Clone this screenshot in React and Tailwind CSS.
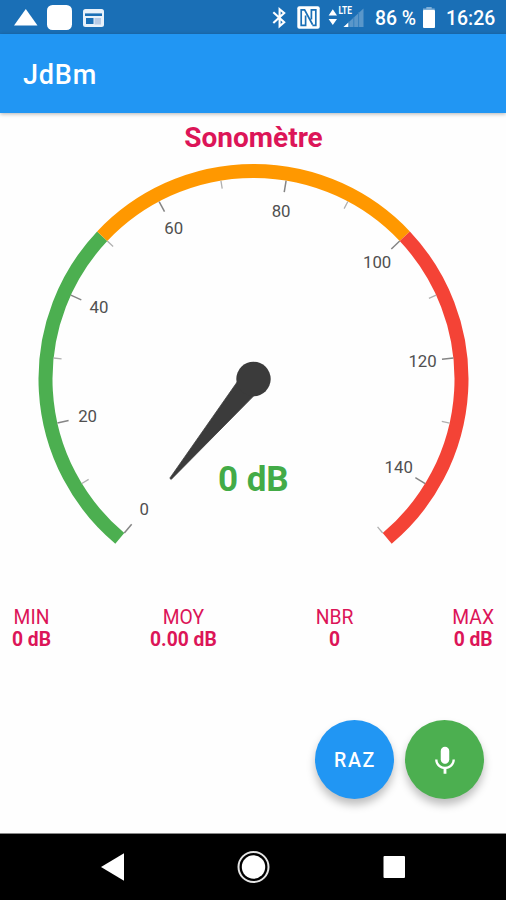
import React from 'react';

const CX = 253.5;
const CY = 379;
const START = 130;
const SWEEP = 280;
const MAX = 150;

const zones = [
    { from: 0, to: 50, color: '#4caf50' },
    { from: 50, to: 100, color: '#ff9800' },
    { from: 100, to: 150, color: '#f44336' },
];

const stats = [
    { label: 'MIN', value: '0 dB' },
    { label: 'MOY', value: '0.00 dB' },
    { label: 'NBR', value: '0' },
    { label: 'MAX', value: '0 dB' },
];

const polar = (value, r) => {
    const a = ((START + (value / MAX) * SWEEP) * Math.PI) / 180;
    return [CX + r * Math.cos(a), CY + r * Math.sin(a)];
};

const arc = (from, to, r) => {
    const [x1, y1] = polar(from, r);
    const [x2, y2] = polar(to, r);
    return `M${x1} ${y1} A${r} ${r} 0 0 1 ${x2} ${y2}`;
};

const Gauge = () => {
    const ticks = Array.from({ length: 16 }, (_, i) => i * 10);
    return (
        <svg width="506" height="390" viewBox="0 158 506 390" className="block">
            {zones.map((z) => (
                <path key={z.from} d={arc(z.from, z.to, 208)} fill="none" stroke={z.color} strokeWidth="14" />
            ))}
            {ticks.map((t) => {
                const major = t % 20 === 0;
                const [x1, y1] = polar(t, 201);
                const [x2, y2] = polar(t, major ? 189.5 : 193);
                return (
                    <line key={t} x1={x1} y1={y1} x2={x2} y2={y2} stroke={major ? '#858585' : '#b0b0b0'} strokeWidth={major ? 1.5 : 1.3} />
                );
            })}
            {ticks.filter((t) => t % 20 === 0).map((t) => {
                const [x, y] = polar(t, 170);
                return (
                    <text key={t} x={x} y={y + 5.3} textAnchor="middle" fontSize="16.8" fill="#505050">{t}</text>
                );
            })}
            <path d="M169.8 478.2 L244.5 371.5 L262.5 387 L171.2 479.4 Z" fill="#3b3b3b" stroke="#3b3b3b" strokeWidth="0.8" strokeLinejoin="round" />
            <circle cx={CX} cy={CY} r="17.2" fill="#3b3b3b" />
            <text x="253.3" y="491" textAnchor="middle" fontSize="35" fontWeight="700" fill="#43ab47">0 dB</text>
        </svg>
    );
};

const StatusBar = () => (
    <div className="flex h-[34px] items-center bg-[#1a6fb6] text-white">
        <svg width="120" height="34" viewBox="0 0 120 34">
            <path d="M25.8 9 L37.5 25.5 H14 Z" fill="#fff" />
            <rect x="47" y="5" width="25" height="25" rx="5.5" fill="#fff" />
            <rect x="83" y="9" width="21" height="18" rx="2.5" fill="#e8f1fa" />
            <path d="M85 14.7 h17" stroke="#1a6fb6" strokeWidth="2.6" />
            <rect x="86" y="18" width="7.5" height="6" fill="#1a6fb6" />
            <rect x="94.5" y="18" width="6.5" height="6.5" fill="#b8cbe6" />
        </svg>
        <div className="grow" />
        <svg width="96" height="34" viewBox="270 0 96 34">
            <path d="M272.3 12.3 L283.2 22.3 L278.6 26.2 V9.2 L283.2 13 L272.3 23" fill="none" stroke="#fff" strokeWidth="2.1" />
            <rect x="296.3" y="6.3" width="22.4" height="22.4" rx="2" fill="#fff" />
            <path d="M304.6 15.5 V25.3 H300.2 V9.8 H303.6 L311.5 24.5 M310.4 19.5 V9.8 H314.8 V25.3 H311.4" fill="none" stroke="#1a6fb6" strokeWidth="1.7" />
            <path d="M331.8 9.3 L336 15.5 H327.6 Z M331.8 25 L336 19 H327.6 Z" fill="#fff" />
            <path d="M342.5 27 L362.5 8.5 V27 Z" fill="#5a97ca" />
            <path d="M342.5 27 L347.5 22.4 V27 Z" fill="#fff" />
            <path d="M348 21 V27 M352.8 17 V27 M357.6 12 V27" stroke="#337fbe" strokeWidth="1" />
            <text x="337.5" y="14" fontSize="10" fontWeight="700" fill="#fff" textLength="13.5" lengthAdjust="spacingAndGlyphs">LTE</text>
        </svg>
        <span className="ml-[8px] w-[42px] whitespace-nowrap pt-[3px] text-[19.4px] font-medium leading-none">86 %</span>
        <svg width="14" height="34" viewBox="0 0 14 34" className="ml-[5px]">
            <path d="M4.3 7 h5.4 v1.5 h3 v3 H1 v-3 h3.3 Z" fill="#7fafd8" />
            <rect x="1" y="10" width="12" height="18" rx="1" fill="#fff" />
        </svg>
        <span className="ml-[10px] w-[60px] whitespace-nowrap pt-[3px] text-[19.4px] font-medium leading-none">16:26</span>
    </div>
);

const App = () => (
    <div className="flex h-[900px] w-[506px] flex-col overflow-hidden bg-[#fefefe] font-['Roboto',sans-serif]">
        <StatusBar />
        <header className="flex h-[79px] shrink-0 items-center bg-[#2196f3] pl-[23px] shadow-[0_1px_4px_rgba(0,0,0,0.3)]">
            <h1 className="pt-[4px] text-[27px] font-medium leading-none tracking-[0.8px] text-white">JdBm</h1>
        </header>
        <main className="flex grow flex-col">
            <h2 className="flex h-[45px] items-center justify-center pt-1 pl-px text-[28px] font-bold leading-none text-[#dc1558]">Sonomètre</h2>
            <Gauge />
            <div className="mt-[59px] flex justify-between px-3 text-center text-[19.3px] leading-[22px] text-[#dc1558]">
                {stats.map((s) => (
                    <div key={s.label}>
                        <div>{s.label}</div>
                        <div className="font-bold">{s.value}</div>
                    </div>
                ))}
            </div>
            <div className="mt-auto mb-[34px] flex justify-end gap-[11px] pr-[22px]">
                <button className="flex size-[79px] items-center justify-center rounded-full bg-[#2196f3] pt-[2px] pl-px text-[19.5px] font-medium tracking-[1.7px] text-white shadow-[0_6px_9px_rgba(0,0,0,0.25)]">RAZ</button>
                <button className="flex size-[79px] items-center justify-center rounded-full bg-[#4caf50] pt-[2px] shadow-[0_6px_9px_rgba(0,0,0,0.25)]">
                    <svg width="34" height="34" viewBox="0 0 24 24" fill="#fff">
                        <path d="M12 14c1.66 0 3-1.34 3-3V5c0-1.66-1.34-3-3-3S9 3.34 9 5v6c0 1.66 1.34 3 3 3z" />
                        <path d="M17.3 11c0 3-2.54 5.1-5.3 5.1S6.7 14 6.7 11H5c0 3.41 2.72 6.23 6 6.72V21h2v-3.28c3.28-.48 6-3.3 6-6.72h-1.7z" />
                    </svg>
                </button>
            </div>
        </main>
        <nav className="h-[67px] shrink-0 border-t border-[#888888] bg-black">
            <svg width="506" height="66" viewBox="0 834 506 66">
                <path d="M101 867 L124 853.2 V880.8 Z" fill="#fff" />
                <circle cx="253.5" cy="867" r="15" fill="none" stroke="#e5e5e5" strokeWidth="2" />
                <circle cx="253.5" cy="867" r="11.7" fill="#fff" />
                <rect x="383.5" y="856" width="21.5" height="22" rx="1" fill="#fff" />
            </svg>
        </nav>
    </div>
);

export default App;
